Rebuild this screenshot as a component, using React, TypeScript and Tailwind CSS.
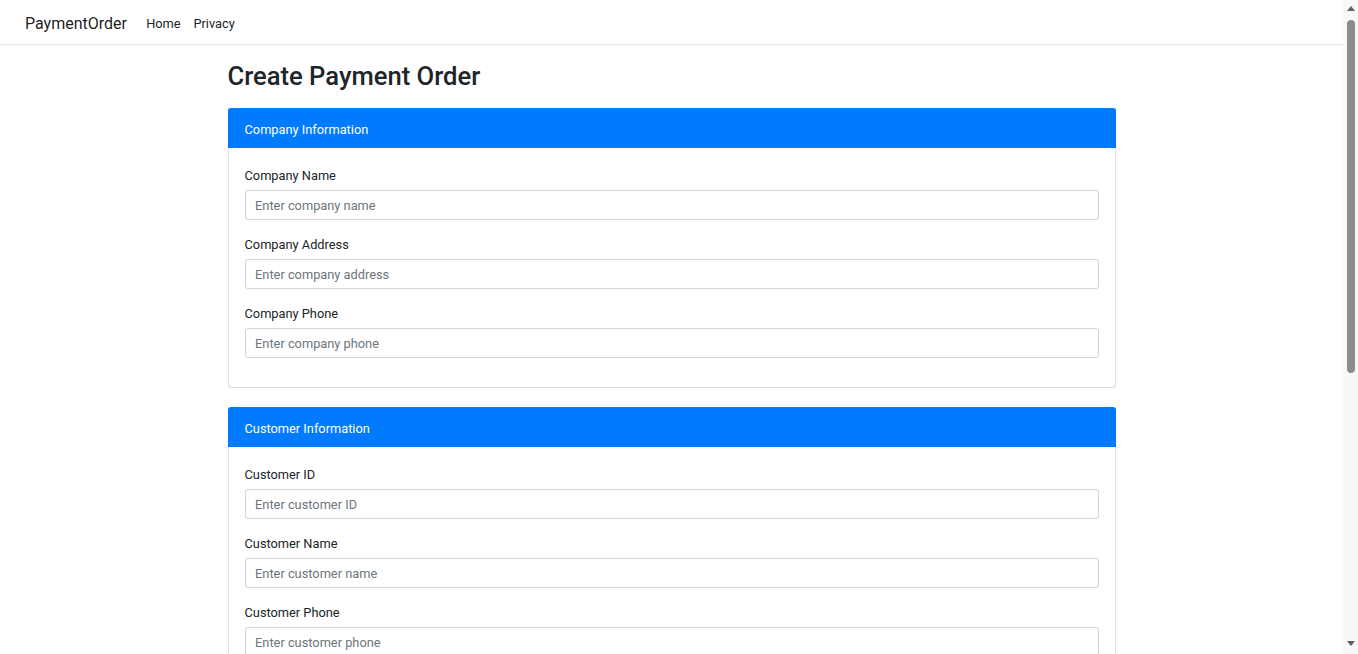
import React from 'react';

type Field = { label: string; placeholder: string };

const sections: { title: string; fields: Field[] }[] = [
  {
    title: 'Company Information',
    fields: [
      { label: 'Company Name', placeholder: 'Enter company name' },
      { label: 'Company Address', placeholder: 'Enter company address' },
      { label: 'Company Phone', placeholder: 'Enter company phone' },
    ],
  },
  {
    title: 'Customer Information',
    fields: [
      { label: 'Customer ID', placeholder: 'Enter customer ID' },
      { label: 'Customer Name', placeholder: 'Enter customer name' },
      { label: 'Customer Phone', placeholder: 'Enter customer phone' },
      { label: 'Customer Address', placeholder: 'Enter customer address' },
    ],
  },
  {
    title: 'Payment Details',
    fields: [
      { label: 'Amount', placeholder: 'Enter amount' },
      { label: 'Payment Date', placeholder: 'Enter payment date' },
      { label: 'Description', placeholder: 'Enter description' },
    ],
  },
];

const Section = ({ title, fields }: { title: string; fields: Field[] }) => (
  <div className="mb-[19px] rounded-[3px] border border-black/[0.125] bg-white">
    <div className="-mx-px -mt-px flex h-10 items-center rounded-t-[3px] bg-[#007bff] px-[17px] pt-[3px] text-[12.8px] text-white">
      {title}
    </div>
    <div className="p-4">
      {fields.map((f) => (
        <div key={f.label} className="mb-[13px]">
          <label className="mb-[4.4px] block pt-[2px] text-[12.8px] leading-[19.2px] text-[#212529]">{f.label}</label>
          <input
            type="text"
            placeholder={f.placeholder}
            className="block h-[30.4px] w-full rounded-[3px] border border-[#ced4da] px-[9.6px] pt-[2px] text-[12.8px] text-[#495057] outline-none placeholder:text-[#6c757d]"
          />
        </div>
      ))}
    </div>
  </div>
);

// the page's vertical scrollbar, as it appears in the picture
const ScrollBar = () => (
  <aside className="flex h-full w-[15px] shrink-0 flex-col items-center bg-[#f8f8f8]">
    <div className="mt-[6px] h-0 w-0 border-x-[4px] border-b-[5px] border-x-transparent border-b-[#606060]" />
    <div className="mt-[9px] h-[353px] w-[8px] rounded-full bg-[#8c8c8c]" />
    <div className="flex-1" />
    <div className="mb-[8px] h-0 w-0 border-x-[4px] border-t-[5px] border-x-transparent border-t-[#606060]" />
  </aside>
);

export default function App() {
  return (
    <div className="flex h-screen overflow-hidden bg-white font-['Segoe_UI','Roboto',sans-serif] text-[#212529]">
      <div className="min-w-0 flex-1">
        <nav className="flex h-[45px] items-center border-b border-[#e5e5e5] px-[25px] pt-[4px] shadow-[0_1px_3px_rgba(0,0,0,0.04)]">
          <span className="mr-[12.8px] text-[16px] text-black/90">PaymentOrder</span>
          <a className="px-[6.4px] text-[12.8px] text-[#212529]">Home</a>
          <a className="px-[6.4px] text-[12.8px] text-[#212529]">Privacy</a>
        </nav>
        <main className="mx-auto w-[912px] px-3 pb-[60px]">
          <h2 className="mb-[7px] mt-[16px] text-[25.6px] font-medium leading-[31px]">Create Payment Order</h2>
          <div className="pt-[9px]">
            {sections.map((s) => (
              <Section key={s.title} {...s} />
            ))}
            <button className="rounded-[3px] bg-[#007bff] px-3 py-[5px] text-[12.8px] text-white">
              Create Payment Order
            </button>
          </div>
        </main>
      </div>
      <ScrollBar />
    </div>
  );
}
